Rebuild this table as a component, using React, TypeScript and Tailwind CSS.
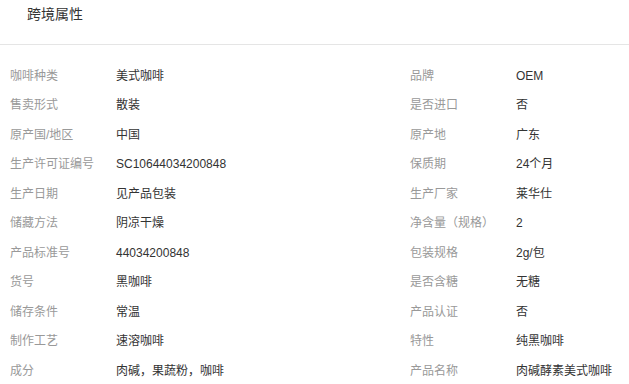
import React from 'react';

const rows: [string, string, string, string][] = [
  ['咖啡种类', '美式咖啡', '品牌', 'OEM'],
  ['售卖形式', '散装', '是否进口', '否'],
  ['原产国/地区', '中国', '原产地', '广东'],
  ['生产许可证编号', 'SC10644034200848', '保质期', '24个月'],
  ['生产日期', '见产品包装', '生产厂家', '莱华仕'],
  ['储藏方法', '阴凉干燥', '净含量（规格）', '2'],
  ['产品标准号', '44034200848', '包装规格', '2g/包'],
  ['货号', '黑咖啡', '是否含糖', '无糖'],
  ['储存条件', '常温', '产品认证', '否'],
  ['制作工艺', '速溶咖啡', '特性', '纯黑咖啡'],
  ['成分', '肉碱，果蔬粉，咖啡', '产品名称', '肉碱酵素美式咖啡'],
];

function Cell({ label, value }: { label: string; value: string }) {
  return (
    <div className="flex w-[400px] shrink-0 items-center">
      <div className="w-[106px] shrink-0 text-[#999]">{label}</div>
      <div className="text-[#333]">{value}</div>
    </div>
  );
}

export default function App() {
  return (
    <div
      className="w-[629px] h-[384px] overflow-hidden bg-white text-[12px]"
      style={{ fontFamily: '"Liberation Sans", "Noto Sans CJK SC", sans-serif' }}
    >
      {/* Header */}
      <div className="h-[45px] border-b border-[#e5e5e5] pl-[27px] pt-[5px] text-[14px] leading-[18px] text-[#333]">
        跨境属性
      </div>

      {/* Attribute grid */}
      <div className="pl-[10px] pt-[16px]">
        {rows.map(([l1, v1, l2, v2]) => (
          <div key={l1} className="flex h-[29.5px] items-center whitespace-nowrap">
            <Cell label={l1} value={v1} />
            <Cell label={l2} value={v2} />
          </div>
        ))}
      </div>
    </div>
  );
}
